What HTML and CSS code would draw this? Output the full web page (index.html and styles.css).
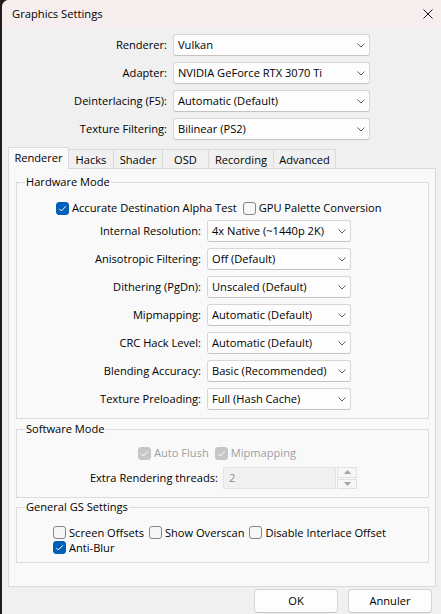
FILE: index.html
```html
<!DOCTYPE html>
<html>
<head>
<meta charset="utf-8">
<link rel="stylesheet" href="styles.css">
</head>
<body>
<div class="window">
  <div class="titlebar">
    <span class="title">Graphics Settings</span>
    <svg class="close" viewBox="0 0 10 10"><path d="M0.5 0.5 L9.5 9.5 M9.5 0.5 L0.5 9.5"/></svg>
  </div>
  <div class="content">
    <div class="top-form">
      <span class="lbl">Renderer:</span>
      <div class="combo"><span class="ctext">Vulkan</span><svg class="chev" viewBox="0 0 8 5"><path d="M0.5 0.5 L4 4 L7.5 0.5"/></svg></div>
      <span class="lbl">Adapter:</span>
      <div class="combo"><span class="ctext">NVIDIA GeForce RTX 3070 Ti</span><svg class="chev" viewBox="0 0 8 5"><path d="M0.5 0.5 L4 4 L7.5 0.5"/></svg></div>
      <span class="lbl">Deinterlacing (F5):</span>
      <div class="combo"><span class="ctext">Automatic (Default)</span><svg class="chev" viewBox="0 0 8 5"><path d="M0.5 0.5 L4 4 L7.5 0.5"/></svg></div>
      <span class="lbl">Texture Filtering:</span>
      <div class="combo"><span class="ctext">Bilinear (PS2)</span><svg class="chev" viewBox="0 0 8 5"><path d="M0.5 0.5 L4 4 L7.5 0.5"/></svg></div>
    </div>

    <div class="tabbar">
      <div class="tab selected t-renderer">Renderer</div>
      <div class="tab t-hacks">Hacks</div>
      <div class="tab t-shader">Shader</div>
      <div class="tab t-osd">OSD</div>
      <div class="tab t-recording">Recording</div>
      <div class="tab t-advanced">Advanced</div>
    </div>

    <div class="pane">
      <div class="group g-hardware">
        <div class="gtitle">Hardware Mode</div>
        <div class="checkrow hw-checks">
          <label class="check"><span class="box on"><svg viewBox="0 0 13 13"><path d="M3.2 6.8 L5.4 9 L9.8 4.3"/></svg></span>Accurate Destination Alpha Test</label>
          <label class="check"><span class="box"></span>GPU Palette Conversion</label>
        </div>
        <div class="hw-form">
          <span class="lbl">Internal Resolution:</span>
          <div class="combo"><span class="ctext">4x Native (~1440p 2K)</span><svg class="chev" viewBox="0 0 8 5"><path d="M0.5 0.5 L4 4 L7.5 0.5"/></svg></div>
          <span class="lbl">Anisotropic Filtering:</span>
          <div class="combo"><span class="ctext">Off (Default)</span><svg class="chev" viewBox="0 0 8 5"><path d="M0.5 0.5 L4 4 L7.5 0.5"/></svg></div>
          <span class="lbl">Dithering (PgDn):</span>
          <div class="combo"><span class="ctext">Unscaled (Default)</span><svg class="chev" viewBox="0 0 8 5"><path d="M0.5 0.5 L4 4 L7.5 0.5"/></svg></div>
          <span class="lbl">Mipmapping:</span>
          <div class="combo"><span class="ctext">Automatic (Default)</span><svg class="chev" viewBox="0 0 8 5"><path d="M0.5 0.5 L4 4 L7.5 0.5"/></svg></div>
          <span class="lbl">CRC Hack Level:</span>
          <div class="combo"><span class="ctext">Automatic (Default)</span><svg class="chev" viewBox="0 0 8 5"><path d="M0.5 0.5 L4 4 L7.5 0.5"/></svg></div>
          <span class="lbl">Blending Accuracy:</span>
          <div class="combo"><span class="ctext">Basic (Recommended)</span><svg class="chev" viewBox="0 0 8 5"><path d="M0.5 0.5 L4 4 L7.5 0.5"/></svg></div>
          <span class="lbl">Texture Preloading:</span>
          <div class="combo"><span class="ctext">Full (Hash Cache)</span><svg class="chev" viewBox="0 0 8 5"><path d="M0.5 0.5 L4 4 L7.5 0.5"/></svg></div>
        </div>
      </div>

      <div class="group g-software">
        <div class="gtitle">Software Mode</div>
        <div class="checkrow sw-checks">
          <label class="check disabled"><span class="box on"><svg viewBox="0 0 13 13"><path d="M3.2 6.8 L5.4 9 L9.8 4.3"/></svg></span>Auto Flush</label>
          <label class="check disabled"><span class="box on"><svg viewBox="0 0 13 13"><path d="M3.2 6.8 L5.4 9 L9.8 4.3"/></svg></span>Mipmapping</label>
        </div>
        <div class="sw-form">
          <span class="lbl">Extra Rendering threads:</span>
          <div class="spinfield">2</div>
          <div class="spinbtns">
            <div class="sbtn"><svg viewBox="0 0 7 4"><path d="M0 4 L3.5 0 L7 4 Z"/></svg></div>
            <div class="sbtn"><svg viewBox="0 0 7 4"><path d="M0 0 L7 0 L3.5 4 Z"/></svg></div>
          </div>
        </div>
      </div>

      <div class="group g-general">
        <div class="gtitle">General GS Settings</div>
        <div class="checkrow gen-row1">
          <label class="check"><span class="box"></span>Screen Offsets</label>
          <label class="check"><span class="box"></span>Show Overscan</label>
          <label class="check"><span class="box"></span>Disable Interlace Offset</label>
        </div>
        <div class="checkrow gen-row2">
          <label class="check"><span class="box on"><svg viewBox="0 0 13 13"><path d="M3.2 6.8 L5.4 9 L9.8 4.3"/></svg></span>Anti-Blur</label>
        </div>
      </div>
    </div>

    <div class="buttons">
      <div class="btn">OK</div>
      <div class="btn">Annuler</div>
    </div>
  </div>
</div>
</body>
</html>
```

FILE: styles.css
```css
* { box-sizing: border-box; }

html, body {
  margin: 0;
  padding: 0;
  width: 441px;
  height: 614px;
  overflow: hidden;
  background: #241a1a;
}

body {
  font-family: "Open Sans", "Noto Sans", "Liberation Sans", sans-serif;
  font-size: 11.1px;
  color: #000;
}

.window {
  margin-left: 2px;
  width: 439px;
  height: 614px;
  background: #f0f0f0;
  border-top-left-radius: 7px;
  overflow: hidden;
}

.titlebar {
  height: 28px;
  background: #f6eeee;
  display: flex;
  align-items: center;
  justify-content: space-between;
  padding: 0 8px 0 10px;
}

.title {
  font-size: 11.2px;
  line-height: 28px;
}

.close {
  width: 10px;
  height: 10px;
  margin-top: -1px;
}
.close path {
  stroke: #1a1a1a;
  stroke-width: 1;
  fill: none;
}

.content {
  display: flex;
  flex-direction: column;
}

.lbl {
  text-align: right;
  align-self: center;
  white-space: nowrap;
  line-height: 16px;
}

.top-form {
  display: grid;
  grid-template-columns: 165px 197px;
  column-gap: 6px;
  row-gap: 6px;
  padding-top: 6px;
}

.combo {
  height: 22px;
  background: #fdfdfd;
  border: 1px solid #d6d6d6;
  border-bottom-color: #c4c4c4;
  border-radius: 3px;
  display: flex;
  align-items: center;
  justify-content: space-between;
  padding: 0 4px 0 4px;
  white-space: nowrap;
}

.ctext {
  line-height: 16px;
}

.chev {
  width: 8px;
  height: 5px;
  flex: none;
}
.chev path {
  stroke: #5e5e5e;
  stroke-width: 1;
  fill: none;
}

.tabbar {
  display: flex;
  align-items: flex-end;
  margin: 7px 0 -1px 6px;
  height: 22px;
  position: relative;
  z-index: 1;
}

.tab {
  height: 20px;
  border: 1px solid #dadada;
  background: #f0f0f0;
  margin-left: -1px;
  display: flex;
  align-items: center;
  justify-content: center;
  line-height: 16px;
  padding-top: 1px;
}
.tab:first-child { margin-left: 0; }

.tab.selected {
  height: 22px;
  background: #f9f9f9;
  border-bottom: none;
  padding-top: 0;
  padding-bottom: 2px;
}

.t-renderer { width: 61px; }
.t-hacks { width: 46px; }
.t-shader { width: 50px; }
.t-osd { width: 47px; }
.t-recording { width: 66px; }
.t-advanced { width: 63px; }

.pane {
  margin-left: 6px;
  width: 428px;
  height: 419px;
  background: #f9f9f9;
  border: 1px solid #dadada;
  padding: 0 6px 0 7px;
  display: flex;
  flex-direction: column;
}

.group {
  border: 1px solid #dcdcdc;
  display: flex;
  flex-direction: column;
}

.gtitle {
  align-self: flex-start;
  margin: -8px 0 0 8px;
  padding: 0 1px;
  line-height: 14px;
  background: #f9f9f9;
}

.g-hardware { margin-top: 13px; padding-bottom: 8px; }
.g-software { margin-top: 10px; padding-bottom: 8px; }
.g-general { margin-top: 9px; padding-bottom: 7px; }

.checkrow {
  display: flex;
  align-items: center;
  gap: 6px;
  white-space: nowrap;
}

.check {
  display: flex;
  align-items: center;
  gap: 3px;
  line-height: 16px;
}

.box {
  width: 13px;
  height: 13px;
  flex: none;
  border: 1px solid #858585;
  border-radius: 3px;
  background: #f7f7f7;
  display: flex;
}
.box svg {
  width: 13px;
  height: 13px;
  margin: -1px;
}
.box svg path {
  stroke: #fff;
  stroke-width: 1;
  fill: none;
}
.box.on {
  background: #005fb8;
  border-color: #005fb8;
}

.check.disabled { color: #a0a0a0; }
.check.disabled .box.on {
  background: #c6c6c6;
  border-color: #c6c6c6;
}

.hw-checks {
  margin-top: 11px;
  height: 16px;
  padding-left: 39px;
}

.hw-form {
  margin-top: 4px;
  display: grid;
  grid-template-columns: 184px 144px;
  column-gap: 6px;
  row-gap: 6px;
}

.sw-checks {
  margin-top: 9px;
  height: 16px;
  padding-left: 121px;
}

.sw-form {
  margin-top: 6px;
  display: grid;
  grid-template-columns: 201px 113px 16px;
  column-gap: 5px;
  height: 22px;
}
.sw-form .spinbtns { margin-left: -4px; }

.spinfield {
  height: 22px;
  background: #f0f0f0;
  border: 1px solid #e2e2e2;
  border-radius: 2px;
  color: #8c8c8c;
  padding-left: 5px;
  line-height: 20px;
}

.spinbtns {
  display: flex;
  flex-direction: column;
  gap: 1px;
  height: 22px;
}

.sbtn {
  flex: 1;
  border: 1px solid #e0e0e0;
  background: #f6f6f6;
  display: flex;
  align-items: center;
  justify-content: center;
}
.sbtn svg {
  width: 7px;
  height: 4px;
}
.sbtn svg path { fill: #a3a3a3; }

.gen-row1 {
  margin-top: 11px;
  height: 15px;
  padding-left: 36px;
  gap: 5px;
}
.gen-row2 {
  height: 15px;
  padding-left: 36px;
}

.buttons {
  margin-top: 2px;
  display: flex;
  justify-content: flex-end;
  gap: 10px;
  padding-right: 9px;
}

.btn {
  width: 84px;
  height: 24px;
  background: #fdfdfd;
  border: 1px solid #d6d6d6;
  border-bottom-color: #c6c6c6;
  border-radius: 4px;
  display: flex;
  align-items: center;
  justify-content: center;
  line-height: 16px;
}
```
